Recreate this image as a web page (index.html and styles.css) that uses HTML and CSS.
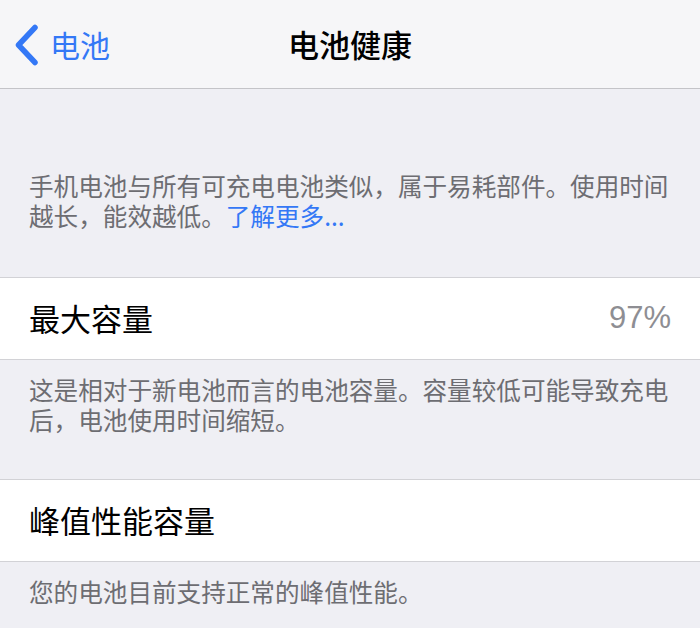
FILE: index.html
```html
<!DOCTYPE html>
<html lang="zh-CN">
<head>
<meta charset="utf-8">
<title>电池健康</title>
<link rel="stylesheet" href="styles.css">
</head>
<body>
<div class="screen">
  <header class="nav">
    <a class="back" href="#">
      <svg class="chev" width="26" height="42" viewBox="0 0 26 42"><path d="M23 3.5 L6.5 21 L23 38.5" fill="none" stroke="#3478f6" stroke-width="5.5" stroke-linecap="round" stroke-linejoin="round"/></svg>
      <span class="back-label">电池</span>
    </a>
    <h1 class="title">电池健康</h1>
    <span class="nav-spacer"></span>
  </header>

  <p class="note note-top">手机电池与所有可充电电池类似，属于易耗部件。使用时间越长，能效越低。<a class="link" href="#">了解更多...</a></p>

  <div class="cell">
    <span class="cell-label">最大容量</span>
    <span class="cell-value">97%</span>
  </div>
  <p class="note">这是相对于新电池而言的电池容量。容量较低可能导致充电后，电池使用时间缩短。</p>

  <div class="cell">
    <span class="cell-label">峰值性能容量</span>
  </div>
  <p class="note note-last">您的电池目前支持正常的峰值性能。</p>
</div>
</body>
</html>
```

FILE: styles.css
```css
* { box-sizing: border-box; }
html, body {
  margin: 0;
  padding: 0;
  background: #efeff4;
}
body {
  font-family: "Noto Sans CJK SC", "Noto Sans", sans-serif;
  width: 700px;
  height: 628px;
  overflow: hidden;
}
.screen {
  display: flex;
  flex-direction: column;
}
.nav {
  height: 89px;
  background: #f6f6f8;
  border-bottom: 1px solid #c4c4c8;
  display: grid;
  grid-template-columns: 1fr auto 1fr;
  align-items: center;
  padding: 0 12px;
}
.back {
  display: flex;
  align-items: center;
  gap: 12px;
  text-decoration: none;
  color: #3478f6;
}
.chev { display: block; margin-top: 1px; }
.back-label {
  font-size: 30px;
  line-height: 40px;
}
.title {
  margin: 0;
  font-size: 31px;
  font-weight: 500;
  color: #000;
  line-height: 40px;
}
.note {
  margin: 0;
  padding: 14px 29px 45px;
  font-size: 24.6px;
  line-height: 30px;
  color: #6d6d72;
}
.note-top {
  padding-top: 81px;
  padding-bottom: 47px;
}
.note-last { padding-bottom: 20px; }
.link {
  color: #3478f6;
  text-decoration: none;
}
.cell {
  height: 83px;
  background: #fff;
  border-top: 1px solid #d2d2d6;
  border-bottom: 1px solid #d2d2d6;
  display: flex;
  align-items: center;
  justify-content: space-between;
  padding: 0 29px 2px 29px;
}
.cell-label {
  font-size: 31px;
  color: #000;
}
.cell-value {
  font-family: "Liberation Sans", "Noto Sans", sans-serif;
  font-size: 31px;
  color: #8e8e93;
}
```
